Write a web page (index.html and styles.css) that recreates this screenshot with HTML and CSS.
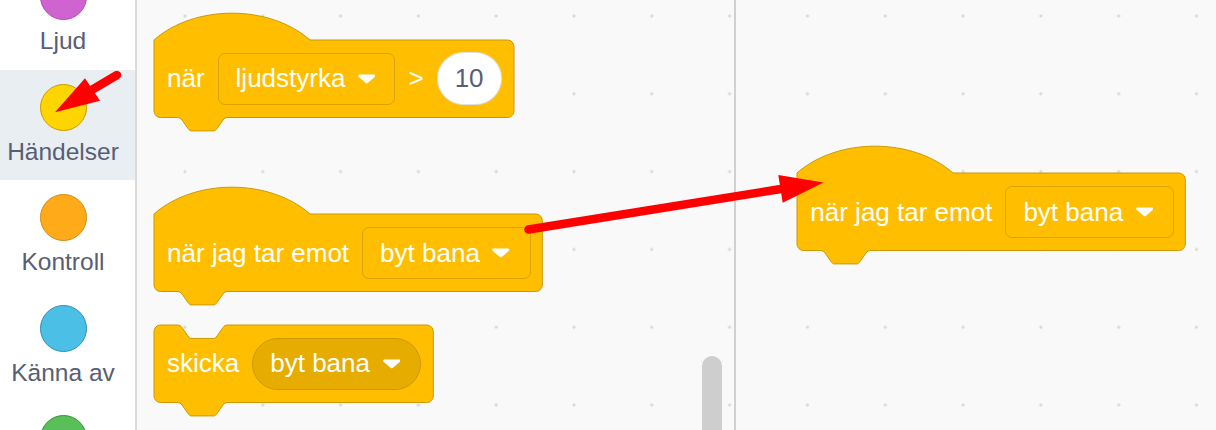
FILE: index.html
```html
<!DOCTYPE html>
<html lang="sv">
<head>
<meta charset="utf-8">
<title>Händelser</title>
<link rel="stylesheet" href="styles.css">
</head>
<body>
<div class="app">
  <nav class="categories">
    <div class="cat-list">
      <div class="cat"><span class="cat-dot dot-sound"></span><span class="cat-label">Ljud</span></div>
      <div class="cat selected"><span class="cat-dot dot-events"></span><span class="cat-label">Händelser</span></div>
      <div class="cat"><span class="cat-dot dot-control"></span><span class="cat-label">Kontroll</span></div>
      <div class="cat"><span class="cat-dot dot-sensing"></span><span class="cat-label">Känna av</span></div>
      <div class="cat"><span class="cat-dot dot-operators"></span></div>
    </div>
  </nav>

  <section class="flyout">
    <div class="block hat b-loud">
      <svg class="shape" width="363" height="122" viewBox="0 0 363 122"><path d="M1,29 c40.6,-35.75 115.4,-35.75 156,0 H354.5 a6.5,6.5 0 0 1 6.5,6.5 V100 a6.5,6.5 0 0 1 -6.5,6.5 H75 c-2.5,0 -4,1 -5,2.5 l-6,8.5 c-1,1.5 -2,2.4 -3,2.4 H38 c-1,0 -2,-0.9 -3,-2.4 l-6,-8.5 c-1,-1.5 -2.5,-2.5 -5,-2.5 H7.5 a6.5,6.5 0 0 1 -6.5,-6.5 Z"/></svg>
      <div class="row">
        <span class="txt">när</span>
        <span class="field">ljudstyrka<svg class="caret" width="17.5" height="9.5" viewBox="0 0 17.5 9.5"><path d="M1.5,0.5 H16 c1.2,0 1.8,1.3 1,2.2 L10,8.8 c-0.7,0.7 -1.7,0.7 -2.4,0 L0.5,2.7 C-0.3,1.8 0.3,0.5 1.5,0.5 Z"/></svg></span>
        <span class="txt">&gt;</span>
        <span class="num">10</span>
      </div>
    </div>

    <div class="block hat b-receive">
      <svg class="shape" width="391" height="122" viewBox="0 0 391 122"><path d="M1,29 c40.6,-35.75 115.4,-35.75 156,0 H382.8 a6.5,6.5 0 0 1 6.5,6.5 V100 a6.5,6.5 0 0 1 -6.5,6.5 H75 c-2.5,0 -4,1 -5,2.5 l-6,8.5 c-1,1.5 -2,2.4 -3,2.4 H38 c-1,0 -2,-0.9 -3,-2.4 l-6,-8.5 c-1,-1.5 -2.5,-2.5 -5,-2.5 H7.5 a6.5,6.5 0 0 1 -6.5,-6.5 Z"/></svg>
      <div class="row">
        <span class="txt">när jag tar emot</span>
        <span class="field">byt bana<svg class="caret" width="17.5" height="9.5" viewBox="0 0 17.5 9.5"><path d="M1.5,0.5 H16 c1.2,0 1.8,1.3 1,2.2 L10,8.8 c-0.7,0.7 -1.7,0.7 -2.4,0 L0.5,2.7 C-0.3,1.8 0.3,0.5 1.5,0.5 Z"/></svg></span>
      </div>
    </div>

    <div class="block stack b-broadcast">
      <svg class="shape" width="282" height="93" viewBox="0 0 282 93"><path d="M1,7.5 a6.5,6.5 0 0 1 6.5,-6.5 H24 c2.5,0 4,1 5,2.5 l6,8.5 c1,1.5 2,2.4 3,2.4 H61 c1,0 2,-0.9 3,-2.4 l6,-8.5 c1,-1.5 2.5,-2.5 5,-2.5 H273.8 a6.5,6.5 0 0 1 6.5,6.5 V72 a6.5,6.5 0 0 1 -6.5,6.5 H75 c-2.5,0 -4,1 -5,2.5 l-6,8.5 c-1,1.5 -2,2.4 -3,2.4 H38 c-1,0 -2,-0.9 -3,-2.4 l-6,-8.5 c-1,-1.5 -2.5,-2.5 -5,-2.5 H7.5 a6.5,6.5 0 0 1 -6.5,-6.5 Z"/></svg>
      <div class="row">
        <span class="txt">skicka</span>
        <span class="field round">byt bana<svg class="caret" width="17.5" height="9.5" viewBox="0 0 17.5 9.5"><path d="M1.5,0.5 H16 c1.2,0 1.8,1.3 1,2.2 L10,8.8 c-0.7,0.7 -1.7,0.7 -2.4,0 L0.5,2.7 C-0.3,1.8 0.3,0.5 1.5,0.5 Z"/></svg></span>
      </div>
    </div>

    <div class="scrollbar"></div>
  </section>

  <section class="workspace">
    <div class="block hat b-receive-ws">
      <svg class="shape" width="391" height="122" viewBox="0 0 391 122"><path d="M1,29 c40.6,-35.75 115.4,-35.75 156,0 H382.8 a6.5,6.5 0 0 1 6.5,6.5 V100 a6.5,6.5 0 0 1 -6.5,6.5 H75 c-2.5,0 -4,1 -5,2.5 l-6,8.5 c-1,1.5 -2,2.4 -3,2.4 H38 c-1,0 -2,-0.9 -3,-2.4 l-6,-8.5 c-1,-1.5 -2.5,-2.5 -5,-2.5 H7.5 a6.5,6.5 0 0 1 -6.5,-6.5 Z"/></svg>
      <div class="row">
        <span class="txt">när jag tar emot</span>
        <span class="field">byt bana<svg class="caret" width="17.5" height="9.5" viewBox="0 0 17.5 9.5"><path d="M1.5,0.5 H16 c1.2,0 1.8,1.3 1,2.2 L10,8.8 c-0.7,0.7 -1.7,0.7 -2.4,0 L0.5,2.7 C-0.3,1.8 0.3,0.5 1.5,0.5 Z"/></svg></span>
      </div>
    </div>
  </section>

  <svg class="annotations" width="1216" height="430" viewBox="0 0 1216 430">
    <line x1="117" y1="75" x2="92.5" y2="89.5" stroke="#ff0000" stroke-width="8.5" stroke-linecap="round"/>
    <polygon points="55,112.3 85,78.3 100,100.7" fill="#ff0000"/>
    <line x1="528.5" y1="229.5" x2="781" y2="189" stroke="#ff0000" stroke-width="8.5" stroke-linecap="round"/>
    <polygon points="823.5,182.5 778.3,175 782.7,202.7" fill="#ff0000"/>
  </svg>
</div>
</body>
</html>
```

FILE: styles.css
```css
html, body {
  margin: 0;
  padding: 0;
}

body {
  width: 1216px;
  height: 430px;
  overflow: hidden;
  font-family: "Liberation Sans", Arial, Helvetica, sans-serif;
  background: #f9f9f9;
}

.app {
  position: relative;
  display: flex;
  width: 1216px;
  height: 430px;
  overflow: hidden;
}

/* ---------- category menu ---------- */
.categories {
  flex: 0 0 135px;
  background: #ffffff;
  border-right: 2px solid #dadada;
  overflow: hidden;
}

.cat-list {
  display: flex;
  flex-direction: column;
  margin-top: -41px;
}

.cat {
  flex: 0 0 110.5px;
  height: 110.5px;
  box-sizing: border-box;
  display: flex;
  flex-direction: column;
  align-items: center;
  padding: 14px 9px 0 0;
}

.cat.selected {
  background: #e9eef2;
}

.cat-dot {
  width: 47px;
  height: 47px;
  box-sizing: border-box;
  border-radius: 50%;
  border: 1.5px solid;
}

.dot-sound { background: #cf63cf; border-color: #bd42bd; }
.dot-events { background: #ffd500; border-color: #cc9900; }
.dot-control { background: #ffab19; border-color: #cf8b17; }
.dot-sensing { background: #4cbfe6; border-color: #2e8eb8; }
.dot-operators { background: #59c059; border-color: #389438; }

.cat-label {
  margin-top: 7px;
  font-size: 24.5px;
  line-height: 28px;
  color: #575e75;
  white-space: nowrap;
}

/* ---------- canvases ---------- */
.flyout {
  position: relative;
  flex: 0 0 597px;
  border-right: 2px solid #d0d0d0;
  background-color: #f9f9f9;
  background-image: radial-gradient(circle, #dadada 1.3px, rgba(218,218,218,0) 1.9px);
  background-size: 77.8px 77.8px;
  background-position: 9.1px -22.9px;
}

.workspace {
  position: relative;
  flex: 1 1 auto;
  background-color: #f9f9f9;
  background-image: radial-gradient(circle, #dadada 1.3px, rgba(218,218,218,0) 1.9px);
  background-size: 77.8px 77.8px;
  background-position: 32.6px -22.9px;
}

.scrollbar {
  position: absolute;
  left: 565px;
  top: 356px;
  width: 20px;
  height: 100px;
  border-radius: 10px;
  background: #cecece;
}

/* ---------- blocks ---------- */
.block {
  position: absolute;
}

.block .shape {
  position: absolute;
  left: 0;
  top: 0;
  overflow: visible;
}

.block .shape path {
  fill: #ffbf00;
  stroke: #cc9900;
  stroke-width: 1;
}

.row {
  position: relative;
  display: flex;
  align-items: center;
  gap: 13px;
  height: 77.5px;
  padding-left: 14px;
  font-size: 26px;
  color: #ffffff;
  white-space: nowrap;
}

.hat .row { margin-top: 29px; }
.stack .row { margin-top: 1px; }

.b-loud { left: 16px; top: 11px; width: 363px; height: 122px; }
.b-receive { left: 16px; top: 185.3px; width: 391px; height: 122px; }
.b-broadcast { left: 16px; top: 324px; width: 282px; height: 93px; }
.b-receive-ws { left: 60.3px; top: 144.3px; width: 391px; height: 122px; }

.field {
  display: flex;
  align-items: center;
  gap: 12.5px;
  height: 52px;
  box-sizing: border-box;
  padding: 0 20px 0 17px;
  border: 1px solid #d9a300;
  border-radius: 7px;
  background: #ffbf00;
}

.field.round {
  border-radius: 26px;
  background: #e6ac00;
  border-color: #cc9900;
}

.b-loud .field { padding: 0 19px 0 17px; }

.caret {
  display: block;
  flex: 0 0 auto;
}

.caret path {
  fill: #ffffff;
}

.num {
  display: flex;
  align-items: center;
  justify-content: center;
  width: 65px;
  height: 53px;
  box-sizing: border-box;
  border-radius: 27px;
  background: #ffffff;
  border: 1px solid rgba(0, 0, 0, 0.12);
  color: #575e75;
}

/* ---------- annotations ---------- */
.annotations {
  position: absolute;
  left: 0;
  top: 0;
  pointer-events: none;
}
```
